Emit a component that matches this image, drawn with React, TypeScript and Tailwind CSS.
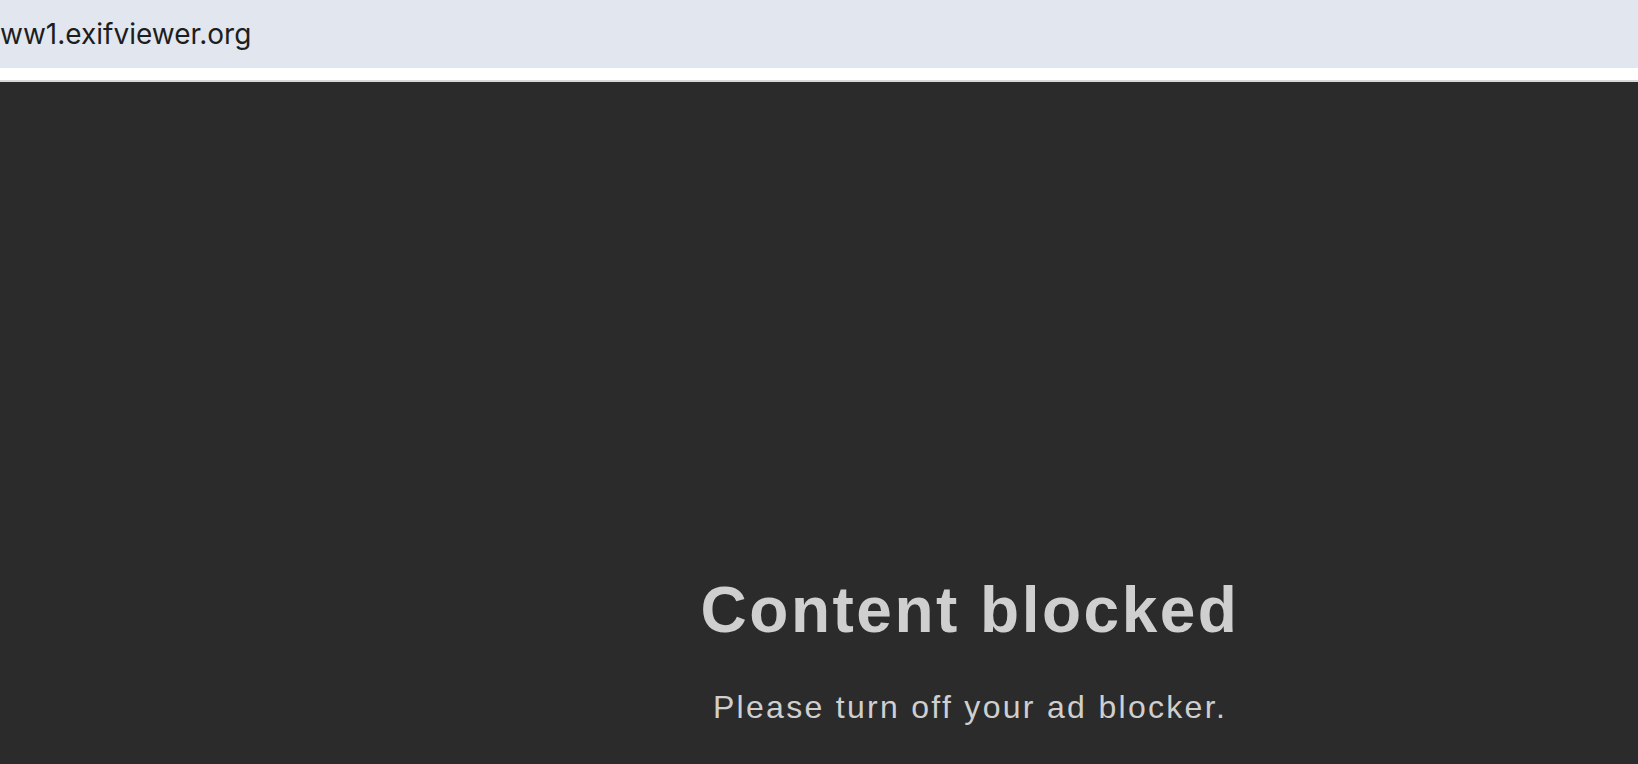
export default function App() {
    return (
        <div className="flex h-[764px] w-full flex-col overflow-hidden bg-[#2b2b2b]">
            {/* address strip */}
            <div className="flex h-[68px] shrink-0 items-center bg-[#e2e7ef]">
                <span className="font-['Inter',sans-serif] text-[28px] leading-none text-[#1e1e1e]">
                    ww1.exifviewer.org
                </span>
            </div>
            <div className="h-[12px] shrink-0 bg-white" />
            <div className="h-[2px] shrink-0 bg-[#d9d9d9]" />

            {/* blocked notice */}
            <div className="flex flex-1 pl-[302px]">
                <div className="flex flex-1 flex-col items-center pt-[496px] font-['Liberation_Sans',Arial,sans-serif] text-[#cfcfcf]">
                    <h1 className="text-[64px] font-bold leading-none tracking-[2.5px]">Content blocked</h1>
                    <p className="mt-[49px] text-[32px] leading-none tracking-[2.3px]">
                        Please turn off your ad blocker.
                    </p>
                </div>
            </div>
        </div>
    );
}
